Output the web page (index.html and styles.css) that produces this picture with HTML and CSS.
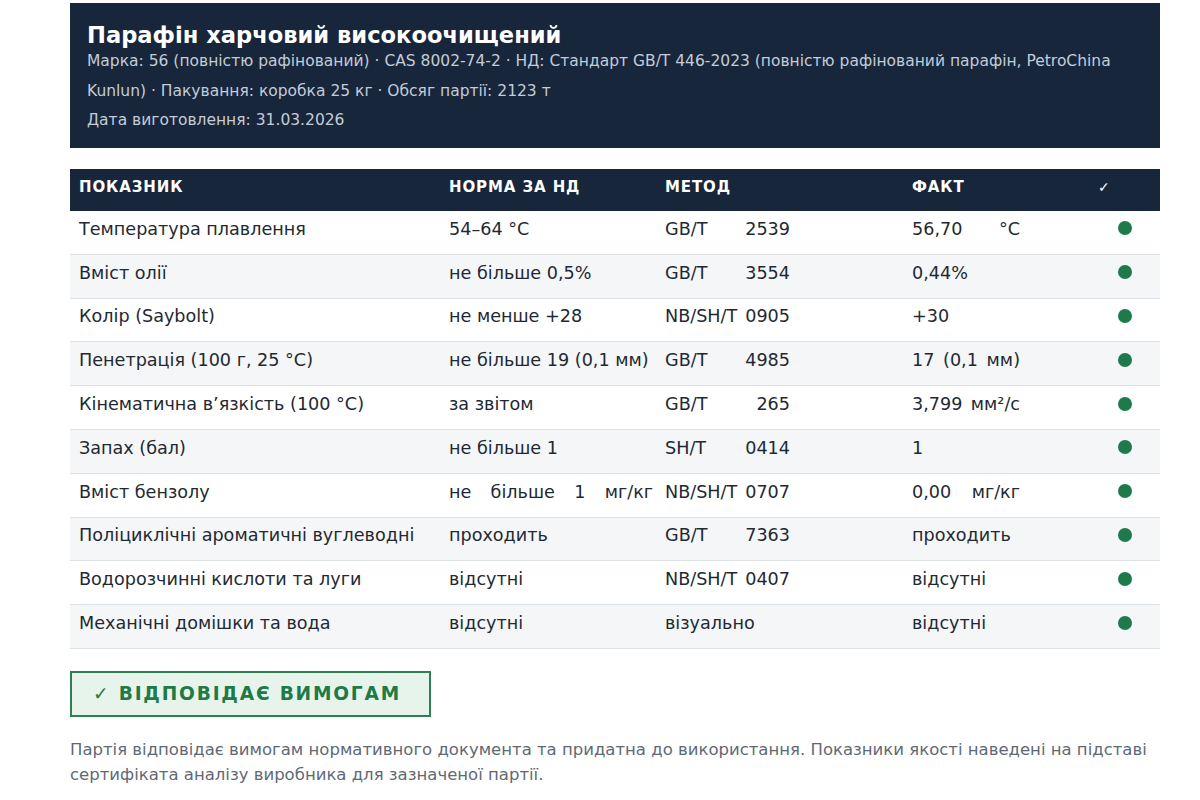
FILE: index.html
```html
<!DOCTYPE html>
<html lang="uk">
<head>
<meta charset="utf-8">
<title>Парафін харчовий високоочищений</title>
<link rel="stylesheet" href="styles.css">
</head>
<body>
<div class="page">
  <header class="head">
    <h1 class="title">Парафін харчовий високоочищений</h1>
    <p class="meta">Марка: 56 (повністю рафінований) · CAS 8002-74-2 · НД: Стандарт GB/T 446-2023 (повністю рафінований парафін, PetroChina Kunlun) · Пакування: коробка 25 кг · Обсяг партії: 2123 т</p>
    <p class="meta">Дата виготовлення: 31.03.2026</p>
  </header>

  <table class="spec">
    <colgroup>
      <col class="c1"><col class="c2"><col class="c3"><col class="c4"><col class="c5">
    </colgroup>
    <thead>
      <tr><th>Показник</th><th>Норма за НД</th><th>Метод</th><th>Факт</th><th class="chk">✓</th></tr>
    </thead>
    <tbody>
      <tr><td>Температура плавлення</td><td>54–64 °C</td><td><span class="j m">GB/T 2539</span></td><td><span class="j f">56,70 °C</span></td><td class="st"><span class="dot"></span></td></tr>
      <tr><td>Вміст олії</td><td>не більше 0,5%</td><td><span class="j m">GB/T 3554</span></td><td>0,44%</td><td class="st"><span class="dot"></span></td></tr>
      <tr><td>Колір (Saybolt)</td><td>не менше +28</td><td><span class="j m">NB/SH/T 0905</span></td><td>+30</td><td class="st"><span class="dot"></span></td></tr>
      <tr><td>Пенетрація (100 г, 25 °C)</td><td>не більше 19 (0,1 мм)</td><td><span class="j m">GB/T 4985</span></td><td><span class="j f">17 (0,1 мм)</span></td><td class="st"><span class="dot"></span></td></tr>
      <tr><td>Кінематична в’язкість (100 °C)</td><td>за звітом</td><td><span class="j m">GB/T 265</span></td><td><span class="j f">3,799 мм²/с</span></td><td class="st"><span class="dot"></span></td></tr>
      <tr><td>Запах (бал)</td><td>не більше 1</td><td><span class="j m">SH/T 0414</span></td><td>1</td><td class="st"><span class="dot"></span></td></tr>
      <tr><td>Вміст бензолу</td><td><span class="j n">не більше 1 мг/кг</span></td><td><span class="j m">NB/SH/T 0707</span></td><td><span class="j f">0,00 мг/кг</span></td><td class="st"><span class="dot"></span></td></tr>
      <tr><td>Поліциклічні ароматичні вуглеводні</td><td>проходить</td><td><span class="j m">GB/T 7363</span></td><td>проходить</td><td class="st"><span class="dot"></span></td></tr>
      <tr><td>Водорозчинні кислоти та луги</td><td>відсутні</td><td><span class="j m">NB/SH/T 0407</span></td><td>відсутні</td><td class="st"><span class="dot"></span></td></tr>
      <tr><td>Механічні домішки та вода</td><td>відсутні</td><td>візуально</td><td>відсутні</td><td class="st"><span class="dot"></span></td></tr>
    </tbody>
  </table>

  <div class="badge">✓ ВІДПОВІДАЄ ВИМОГАМ</div>

  <p class="note">Партія відповідає вимогам нормативного документа та придатна до використання. Показники якості наведені на підставі сертифіката аналізу виробника для зазначеної партії.</p>
</div>
</body>
</html>
```

FILE: styles.css
```css
* { box-sizing: border-box; }

html, body {
  margin: 0;
  padding: 0;
  background: #ffffff;
}

body {
  font-family: "DejaVu Sans", "Noto Sans", sans-serif;
  color: #1f2933;
}

.page {
  width: 1090px;
  margin-left: 70px;
  padding-top: 3px;
}

.head {
  background: #17263b;
  padding: 21px 17px 12px 17px;
  color: #ffffff;
}

.title {
  margin: 0;
  font-size: 22.6px;
  font-weight: bold;
  line-height: 23px;
}

.meta {
  margin: 0;
  font-size: 15.5px;
  line-height: 29.5px;
  color: #c3ccd8;
}

.spec {
  width: 1090px;
  margin-top: 21px;
  border-collapse: collapse;
  table-layout: fixed;
  font-size: 17.6px;
}

.c1 { width: 371px; }
.c2 { width: 216px; }
.c3 { width: 247px; }
.c4 { width: 186px; }
.c5 { width: 70px; }

.spec th {
  background: #17263b;
  color: #ffffff;
  text-align: left;
  font-size: 15px;
  font-weight: bold;
  letter-spacing: 0.9px;
  text-transform: uppercase;
  height: 42px;
  padding: 0 8px 5px 8px;
}

.spec th:first-child,
.spec td:first-child {
  padding-left: 9px;
}

.spec th.chk {
  font-weight: normal;
  font-size: 14px;
  letter-spacing: 0;
}

.spec td {
  height: 43.8px;
  padding: 0 8px 7px 8px;
  border-bottom: 1.5px solid #dde2e8;
  white-space: nowrap;
  vertical-align: middle;
}

.spec tbody tr:nth-child(even) td {
  background: #f4f6f8;
}

.j {
  display: inline-block;
  white-space: normal;
  text-align: justify;
  text-align-last: justify;
}

.j.m { width: 125px; }
.j.f { width: 108px; }
.j.n { width: 204px; }

.spec td.st {
  text-align: center;
  padding: 0 0 10px 0;
}

.dot {
  display: inline-block;
  width: 14px;
  height: 14px;
  border-radius: 50%;
  background: #1f7a4b;
  vertical-align: middle;
}

.badge {
  display: inline-block;
  margin-top: 22px;
  width: 361px;
  height: 46px;
  border: 2px solid #2e8052;
  background: #e7f4eb;
  color: #1f7a46;
  font-size: 18.6px;
  font-weight: bold;
  letter-spacing: 1.8px;
  line-height: 42px;
  padding-left: 21px;
}

.note {
  margin: 20px 0 0 0;
  font-size: 16.5px;
  line-height: 25px;
  color: #5f6975;
}
```
